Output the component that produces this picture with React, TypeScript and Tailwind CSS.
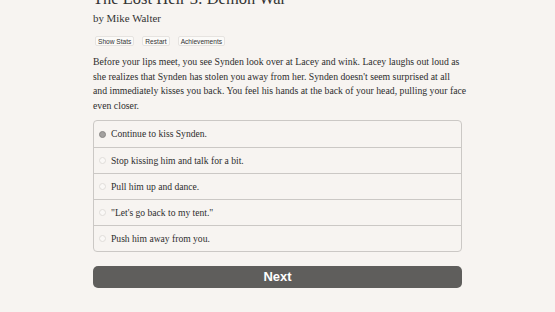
import React from "react";

const choices = [
  "Continue to kiss Synden.",
  "Stop kissing him and talk for a bit.",
  "Pull him up and dance.",
  "\"Let's go back to my tent.\"",
  "Push him away from you.",
];

const lines = [
  "Before your lips meet, you see Synden look over at Lacey and wink. Lacey laughs out loud as",
  "she realizes that Synden has stolen you away from her. Synden doesn't seem surprised at all",
  "and immediately kisses you back. You feel his hands at the back of your head, pulling your face",
  "even closer.",
];

export default function App() {
  return (
    <div className="w-[555px] h-[312px] overflow-hidden bg-[#f7f4f1] text-[#2b2b2b]" style={{ fontFamily: '"Liberation Serif", serif' }}>
      <div className="w-[369px] ml-[93px] flex flex-col">
        <h1 className="h-[20px] text-[16.5px] leading-[20px] mt-[-11px] text-[#333] whitespace-nowrap">The Lost Heir 3: Demon War</h1>
        <div className="h-[14px] text-[10.9px] leading-[14px] mt-[2px] text-[#333]">by Mike Walter</div>
        <div className="flex gap-[8px] mt-[11px] ml-[2px]" style={{ fontFamily: '"Liberation Sans", sans-serif' }}>
          {["Show Stats", "Restart", "Achievements"].map((b) => (
            <span key={b} className="h-[10px] text-[6.6px] leading-[9px] px-[2px] bg-[#fbfaf8] border border-[#e6e3e0] rounded-[2px] text-[#333]">{b}</span>
          ))}
        </div>
        <p className="text-[9.75px] leading-[14.6px] mt-[9px] text-[#2e2e2e]">
          {lines.map((l) => (
            <span key={l} className="block whitespace-nowrap">{l}</span>
          ))}
        </p>
        <div className="mt-[7px] border border-[#cbc8c5] rounded-[4px] flex flex-col">
          {choices.map((c, i) => (
            <div key={c} className={`h-[26px] flex items-center pl-[5px] gap-[5px] ${i > 0 ? "border-t border-[#cbc8c5]" : ""}`}>
              <span className={`w-[7px] h-[7px] rounded-full border ${i === 0 ? "border-[#8a8886] bg-[#a3a19f]" : "border-[#e0ddda] bg-[#faf8f6]"}`}></span>
              <span className="text-[9.6px] text-[#2e2e2e]">{c}</span>
            </div>
          ))}
        </div>
        <button className="mt-[14px] h-[22px] w-[369px] rounded-[5px] bg-[#5f5e5c] text-white text-[13px] font-bold leading-[22px]" style={{ fontFamily: '"Liberation Sans", sans-serif' }}>Next</button>
      </div>
    </div>
  );
}
